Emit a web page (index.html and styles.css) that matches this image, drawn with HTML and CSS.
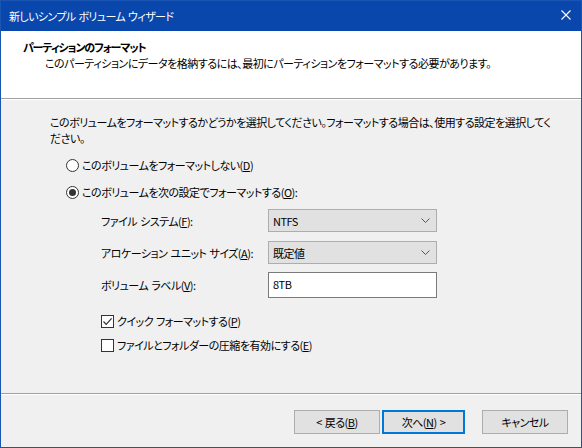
FILE: index.html
```html
<!DOCTYPE html>
<html lang="ja">
<head>
<meta charset="utf-8">
<title>新しいシンプル ボリューム ウィザード</title>
<link rel="stylesheet" href="styles.css">
</head>
<body>
<div class="window">
  <div class="titlebar">
    <span class="title">新しいシンプル ボリューム ウィザード</span>
    <span class="close">
      <svg width="10" height="10" viewBox="0 0 10 10"><path d="M0.5 0.5 L9.5 9.5 M9.5 0.5 L0.5 9.5" stroke="#fff" stroke-width="1.1" fill="none"/></svg>
    </span>
  </div>
  <div class="header">
    <div class="header-title">パーティションのフォーマット</div>
    <div class="header-sub">このパーティションにデータを格納するには、最初にパーティションをフォーマットする必要があります。</div>
  </div>
  <div class="content">
    <p class="intro">このボリュームをフォーマットするかどうかを選択してください。フォーマットする場合は、使用する設定を選択してください。</p>
    <div class="radios">
      <label class="radio-row"><span class="radio"></span>このボリュームをフォーマットしない(<u>D</u>)</label>
      <label class="radio-row"><span class="radio checked"></span>このボリュームを次の設定でフォーマットする(<u>O</u>):</label>
    </div>
    <div class="form">
      <span class="label">ファイル システム(<u>F</u>):</span>
      <div class="combo"><span>NTFS</span><svg class="chev" width="9" height="5" viewBox="0 0 9 5"><path d="M0.5 0.5 L4.5 4.5 L8.5 0.5" stroke="#555" fill="none"/></svg></div>
      <span class="label">アロケーション ユニット サイズ(<u>A</u>):</span>
      <div class="combo second"><span>既定値</span><svg class="chev" width="9" height="5" viewBox="0 0 9 5"><path d="M0.5 0.5 L4.5 4.5 L8.5 0.5" stroke="#555" fill="none"/></svg></div>
      <span class="label third">ボリューム ラベル(<u>V</u>):</span>
      <div class="textbox third">8TB</div>
    </div>
    <div class="checks">
      <label class="check-row"><span class="check checked"><svg width="11" height="11" viewBox="0 0 11 11"><path d="M1.5 5.5 L4.2 8.3 L9.6 2.4" stroke="#333" stroke-width="1.2" fill="none"/></svg></span>クイック フォーマットする(<u>P</u>)</label>
      <label class="check-row"><span class="check"></span>ファイルとフォルダーの圧縮を有効にする(<u>E</u>)</label>
    </div>
  </div>
  <div class="footer">
    <div class="buttons">
      <button class="btn back">&lt;&nbsp;戻る(<u>B</u>)</button>
      <button class="btn next default">次へ(<u>N</u>)&nbsp;&gt;</button>
      <button class="btn cancel">キャンセル</button>
    </div>
  </div>
</div>
</body>
</html>
```

FILE: styles.css
```css
html, body {
  margin: 0;
  padding: 0;
}

body {
  font-family: "Noto Sans CJK JP", "Noto Sans", sans-serif;
  font-size: 11px;
  letter-spacing: -0.5px;
  word-spacing: 1px;
  font-feature-settings: "palt";
  color: #000;
}

u {
  text-decoration: underline;
  text-underline-offset: 1px;
}

.window {
  width: 582px;
  height: 448px;
  box-sizing: border-box;
  border: 1px solid #1a55b3;
  background: #f0f0f0;
  display: flex;
  flex-direction: column;
}

/* caption bar */
.titlebar {
  height: 30px;
  flex: none;
  background: #0a47ad;
  color: #fff;
  display: flex;
  align-items: center;
  justify-content: space-between;
  padding: 0 10px 0 8px;
  line-height: 16px;
  letter-spacing: -0.6px;
}

.close {
  display: flex;
  width: 10px;
  height: 10px;
  margin-top: -2px;
}

/* white page header */
.header {
  height: 68px;
  flex: none;
  box-sizing: border-box;
  background: #fff;
  border-bottom: 1px solid #a0a0a0;
  padding: 8px 0 0 22px;
  line-height: 16px;
}

.header-title {
  font-weight: bold;
  letter-spacing: -1.1px;
}

.header-sub {
  padding-left: 22px;
}

.content {
  flex: 1;
  border-top: 1px solid #fff;
  padding: 14px 26px 0 49px;
  line-height: 16px;
}

.intro {
  margin: 0;
}

.radios {
  margin-top: 11px;
  padding-left: 16px;
  display: flex;
  flex-direction: column;
  gap: 11px;
}

.radio-row,
.check-row {
  display: flex;
  align-items: center;
  height: 16px;
}

.radio {
  width: 13px;
  height: 13px;
  box-sizing: border-box;
  border: 1px solid #333;
  border-radius: 50%;
  background: #fff;
  margin-right: 3px;
  display: flex;
  align-items: center;
  justify-content: center;
}

.radio.checked::after {
  content: "";
  width: 7px;
  height: 7px;
  border-radius: 50%;
  background: #333;
}

.form {
  margin-top: 9px;
  padding-left: 51px;
  display: grid;
  grid-template-columns: 167px 169px;
  grid-template-rows: 23px 23px 26px;
  row-gap: 9px;
  align-items: center;
}

.form .third {
  margin-top: -2px;
}

.combo {
  height: 23px;
  box-sizing: border-box;
  background: #e1e1e1;
  border: 1px solid #adadad;
  display: flex;
  align-items: center;
  justify-content: space-between;
  padding: 0 6px 0 4px;
}

.combo .chev {
  display: block;
}

.textbox {
  height: 26px;
  box-sizing: border-box;
  background: #fff;
  border: 1px solid #7a7a7a;
  padding: 3px 4px;
  line-height: 16px;
}

.checks {
  margin-top: 14px;
  padding-left: 51px;
  display: flex;
  flex-direction: column;
  gap: 8px;
}

.check {
  width: 13px;
  height: 13px;
  box-sizing: border-box;
  border: 1px solid #333;
  background: #fff;
  margin-right: 3px;
  display: flex;
  align-items: center;
  justify-content: center;
}

.check svg {
  display: block;
}

/* button strip */
.footer {
  height: 54px;
  flex: none;
  box-sizing: border-box;
  border-top: 1px solid #a0a0a0;
}

.buttons {
  height: 100%;
  box-sizing: border-box;
  border-top: 1px solid #fff;
  display: flex;
  justify-content: flex-end;
  align-items: flex-start;
  padding: 15px 13px 0 0;
}

.btn {
  font: inherit;
  letter-spacing: inherit;
  word-spacing: inherit;
  font-feature-settings: "palt";
  color: #000;
  height: 24px;
  width: 86px;
  box-sizing: border-box;
  background: #e1e1e1;
  border: 1px solid #adadad;
  padding: 0;
  line-height: 16px;
}

.btn.next {
  width: 83px;
  margin-left: 2px;
  border: 2px solid #0078d7;
}

.btn.cancel {
  margin-left: 17px;
}
```
